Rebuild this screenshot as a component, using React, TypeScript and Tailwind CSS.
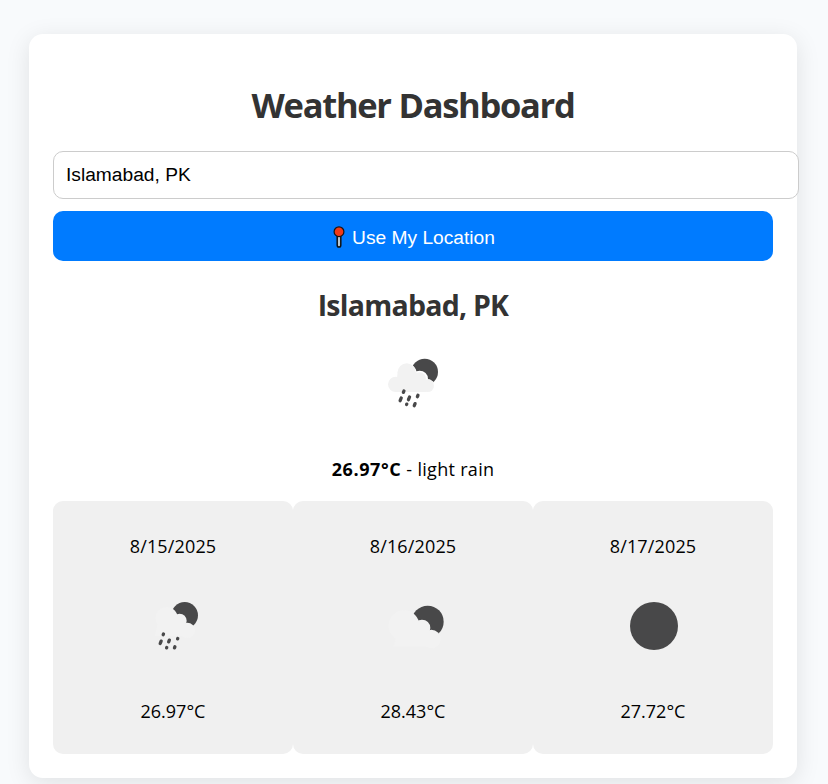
import type { ReactNode } from "react";

const MOON = "#484849";
const CLOUD = "#f2f2f2";

function Icon({ children, viewBox, className }: { children: ReactNode; viewBox: string; className: string }) {
  return (
    <svg viewBox={viewBox} className={`mx-auto block w-[80px] ${className}`} aria-hidden="true">
      {children}
    </svg>
  );
}

function Drops({ points, size }: { points: number[][]; size: number }) {
  return (
    <g stroke={MOON} strokeWidth={size} strokeLinecap="round">
      {points.map(([x, y, d]) => (
        <line key={`${x}-${y}`} x1={x + d * 0.4} y1={y - d} x2={x - d * 0.4} y2={y + d} />
      ))}
    </g>
  );
}

function RainNow() {
  return (
    <Icon viewBox="-6 0 240 225" className="h-[75px]">
      <circle cx="149" cy="81" r="40" fill={MOON} />
      <g fill="#fff">
        <circle cx="92" cy="86" r="33" />
        <circle cx="134" cy="102" r="25" />
        <circle cx="156" cy="126" r="24" />
      </g>
      <g fill={CLOUD}>
        <circle cx="95" cy="82" r="27" />
        <circle cx="62" cy="118" r="23" />
        <circle cx="134" cy="101" r="19" />
        <circle cx="158" cy="122" r="19" />
        <path d="M68 80H122L154 110V141H62Z" />
      </g>
      <Drops size={10} points={[[86, 140, 2], [77, 163, 4], [102, 160, 4], [128, 153, 2], [95, 178, 0.5], [119, 179, 3]]} />
    </Icon>
  );
}

function RainForecast() {
  return (
    <Icon viewBox="-21 0 240 210" className="h-[70px]">
      <circle cx="134" cy="76" r="40" fill={MOON} />
      <g fill={CLOUD}>
        <circle cx="80" cy="84" r="33" />
        <circle cx="119" cy="92" r="21" />
        <circle cx="142" cy="121" r="23" />
        <path d="M55 90H105L140 110V138H45Z" />
      </g>
      <Drops size={10} points={[[70, 133, 1], [62, 157, 3.5], [87, 153, 2.5], [113, 146, 0.5], [80, 173, 0.5], [104, 172, 1.5]]} />
    </Icon>
  );
}

function CloudForecast() {
  return (
    <Icon viewBox="-21 0 240 210" className="h-[70px]">
      <circle cx="143" cy="95" r="48" fill={MOON} />
      <g fill={CLOUD}>
        <circle cx="72" cy="107" r="46" />
        <circle cx="126" cy="114" r="25" />
        <circle cx="154" cy="147" r="28" />
        <path d="M60 105H110L153 130V170H40Z" />
      </g>
    </Icon>
  );
}

function ClearForecast() {
  return (
    <Icon viewBox="-21 0 240 210" className="h-[70px]">
      <circle cx="102" cy="108" r="72" fill={MOON} />
    </Icon>
  );
}

const days = [
  { date: "8/15/2025", temp: "26.97°C", icon: <RainForecast /> },
  { date: "8/16/2025", temp: "28.43°C", icon: <CloudForecast /> },
  { date: "8/17/2025", temp: "27.72°C", icon: <ClearForecast /> },
];

export default function App() {
  return (
    <div className="h-[784px] overflow-hidden bg-[#f8fafc] pt-[34px] pl-[29px] font-['Open_Sans','Noto_Sans',sans-serif] text-black">
      <main className="h-[744px] w-[768px] rounded-[14px] bg-white px-6 pt-[47px] text-center shadow-[0_5px_24px_rgba(0,0,0,0.1)]">
        <h1 className="h-[70px] text-[34.5px] leading-[48px] font-bold tracking-[-1.3px] whitespace-nowrap text-[#333]">
          Weather Dashboard
        </h1>
        <input
          aria-label="City"
          defaultValue="Islamabad, PK"
          className="block h-[48px] w-[746px] rounded-[10px] border border-[#ccc] bg-white px-3 font-['Liberation_Sans',Arial,sans-serif] text-[19.2px] outline-none"
        />
        <button className="mt-3 flex h-[50px] w-full items-center justify-center gap-[7px] rounded-[10px] bg-[#007bff] pt-[2px] pl-[2px] font-['Liberation_Sans',Arial,sans-serif] text-[19.2px] text-white">
          <svg viewBox="0 0 12 22" className="h-[22px] w-[12px]" aria-hidden="true">
            <rect x="4.2" y="9" width="3.6" height="12" rx="1.8" fill="#b8c7d3" stroke="#111" strokeWidth="1.5" />
            <circle cx="6" cy="5.7" r="4.9" fill="#f03a17" stroke="#151515" strokeWidth="1.2" />
          </svg>
          <span className="pt-[2px]">Use My Location</span>
        </button>
        <h2 className="mt-[24px] h-[60px] text-[28.5px] leading-[40px] font-bold tracking-[-0.75px] whitespace-nowrap text-[#333]">
          Islamabad, PK
        </h2>
        <RainNow />
        <p className="mt-[36px] text-[18px] leading-[26px] tracking-[0.3px]">
          <strong className="tracking-[0.6px]">26.97°C</strong> - light rain
        </p>
        <section className="mt-[19px] flex">
          {days.map((day) => (
            <article key={day.date} className="h-[253px] flex-1 rounded-[10px] bg-[#f0f0f0] pt-[32px]">
              <p className="h-[57px] text-[18px] leading-[26px] tracking-[0.15px]">{day.date}</p>
              {day.icon}
              <p className="mt-[38px] text-[18px] leading-[26px]">{day.temp}</p>
            </article>
          ))}
        </section>
      </main>
    </div>
  );
}
